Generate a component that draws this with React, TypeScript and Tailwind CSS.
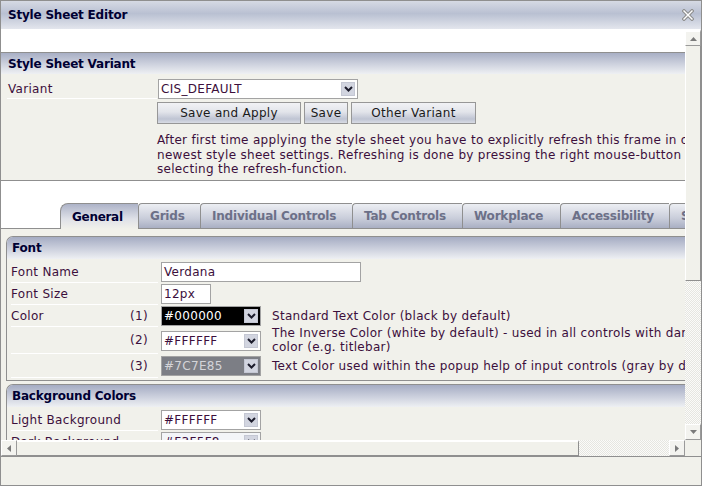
import React from "react";

function Chevron() {
  return (
    <svg width="9" height="6" viewBox="0 0 9 6">
      <path d="M1 1L4.5 4.5L8 1" fill="none" stroke="#1c1c2c" strokeWidth="2" />
    </svg>
  );
}

function DropBtn() {
  return (
    <div className="w-[14px] h-[14px] mr-[2px] shrink-0 flex items-center justify-center bg-[#d2d5e0] border border-[#c4c7d3]">
      <Chevron />
    </div>
  );
}

function Select({
  value,
  className,
  textClass,
}: {
  value: string;
  className: string;
  textClass: string;
}) {
  return (
    <div className={`flex h-[20px] shrink-0 items-center border border-[#a3a3a3] ${className}`}>
      <span className={`flex-1 pl-[2px] whitespace-nowrap leading-none ${textClass}`}>{value}</span>
      <DropBtn />
    </div>
  );
}

function Arrow({ dir }: { dir: "up" | "down" | "left" | "right" }) {
  const pts =
    dir === "up"
      ? "0,4 7,4 3.5,0"
      : dir === "down"
      ? "0,0 7,0 3.5,4"
      : dir === "left"
      ? "4,0 4,7 0,3.5"
      : "0,0 0,7 4,3.5";
  const w = dir === "up" || dir === "down" ? 7 : 4;
  const h = dir === "up" || dir === "down" ? 4 : 7;
  return (
    <svg width={w} height={h} viewBox={`0 0 ${w} ${h}`}>
      <polygon points={pts} fill="#7a7a7a" />
    </svg>
  );
}

function CloseIcon() {
  return (
    <svg width="12" height="12" viewBox="0 0 12 12">
      <path d="M2 2L10 10M10 2L2 10" stroke="#8e8e8e" strokeWidth="3.6" strokeLinecap="square" />
      <path d="M2 2L10 10M10 2L2 10" stroke="#ffffff" strokeWidth="1.4" strokeLinecap="square" />
    </svg>
  );
}

function Tab({ label, w, active }: { label: string; w: string; active?: boolean }) {
  if (active) {
    return (
      <div
        className={`${w} h-[26px] shrink-0 flex items-center pl-[11px] border-l border-t border-[#8f8f8f] rounded-tl-[8px] bg-[linear-gradient(to_bottom,#adb3c8,#dfe1e8_60%,#f1f1eb)] font-bold tracking-[-0.3px] text-[#000033]`}
      >
        {label}
      </div>
    );
  }
  return (
    <div
      className={`${w} h-[26px] shrink-0 flex items-center pl-[11px] border-l border-t border-b border-[#8f8f8f] rounded-tl-[4px] bg-[linear-gradient(to_bottom,#eceef3,#c9cdda_60%,#a9afc3)] font-bold tracking-[-0.2px] text-[#6c7088] whitespace-nowrap`}
    >
      {label}
    </div>
  );
}

function SectionHeader({ title }: { title: string }) {
  return (
    <div className="h-[22px] flex items-center pl-[5px] bg-[linear-gradient(to_bottom,#a5acc3,#cdd1de_55%,#eef0f3)] font-bold tracking-[-0.2px] text-[#000033]">
      {title}
    </div>
  );
}

function Row({
  h,
  label,
  num,
  children,
}: {
  h: string;
  label: string;
  num?: string;
  children: React.ReactNode;
}) {
  return (
    <div className={`${h} flex items-center`}>
      <div className="ml-[4px] w-[147px] h-full shrink-0 flex items-center justify-between pr-[10px] border-b border-white">
        <span>{label}</span>
        <span>{num}</span>
      </div>
      {children}
    </div>
  );
}

export default function App() {
  return (
    <div className="w-[702px] h-[486px] border border-[#8f8f8f] flex flex-col bg-[#f1f1eb] font-['DejaVu_Sans',Verdana,sans-serif] text-[12px] tracking-[0.3px] text-[#3c0f3c] overflow-hidden">
      {/* Title bar */}
      <div className="h-[28px] shrink-0 flex items-center justify-between pl-[7px] pr-[7px] bg-[linear-gradient(to_bottom,#d6dae4,#b9c0d2_45%,#e3e6ed)]">
        <span className="font-bold tracking-[-0.2px] text-[#000033]">Style Sheet Editor</span>
        <CloseIcon />
      </div>

      {/* Scroll region */}
      <div className="h-[411px] shrink-0 flex">
        <div className="w-[684px] overflow-hidden">
          <div className="w-[800px]">
            <div className="h-[24px] bg-white border-b border-[#8f8f8f]" />

            {/* Style Sheet Variant */}
            <div>
              <div className="h-[21px] flex items-center pl-[7px] bg-[linear-gradient(to_bottom,#a8afc5,#cfd3df_55%,#eef0f3)] font-bold tracking-[-0.2px] text-[#000033]">
                Style Sheet Variant
              </div>
              <div className="pt-[5px] flex items-center pl-[6px]">
                <div className="w-[150px] h-[20px] pl-[1px] flex items-center border-b border-white">Variant</div>
                <Select value="CIS_DEFAULT" className="ml-[1px] w-[200px] bg-white" textClass="text-[#3c0f3c]" />
              </div>
              <div className="mt-[3px] ml-[156px] flex gap-[3px]">
                {[
                  ["Save and Apply", "w-[144px]"],
                  ["Save", "w-[44px]"],
                  ["Other Variant", "w-[125px]"],
                ].map(([t, w]) => (
                  <div
                    key={t}
                    className={`${w} h-[22px] flex items-center justify-center border border-[#979797] bg-[linear-gradient(to_bottom,#f1f2f5,#e2e4ea_45%,#bfc4d3_80%,#d9dce4)] text-[#1a1a1a]`}
                  >
                    {t}
                  </div>
                ))}
              </div>
              <div className="mt-[9px] ml-[156px] h-[47px] leading-[14.5px] whitespace-nowrap">
                <div>After first time applying the style sheet you have to explicitly refresh this frame in order to see the</div>
                <div>newest style sheet settings. Refreshing is done by pressing the right mouse-button and</div>
                <div>selecting the refresh-function.</div>
              </div>
            </div>

            {/* Tabs */}
            <div className="bg-white border-t border-[#8f8f8f] pt-[22px] flex items-end">
              <div className="w-[59px] h-[26px] shrink-0 border-b border-[#8f8f8f]" />
              <Tab label="General" w="w-[78px]" active />
              <Tab label="Grids" w="w-[62px]" />
              <Tab label="Individual Controls" w="w-[152px]" />
              <Tab label="Tab Controls" w="w-[110px]" />
              <Tab label="Workplace" w="w-[98px]" />
              <Tab label="Accessibility" w="w-[109px]" />
              <Tab label="Styles" w="w-[90px]" />
              <div className="flex-1 h-[26px] border-b border-l border-[#8f8f8f]" />
            </div>

            {/* Sections */}
            <div className="pt-[7px]">
              <div className="ml-[5px] border-l border-t border-b border-[#8f8f8f] rounded-tl-[7px] overflow-hidden">
                <SectionHeader title="Font" />
                <div className="pt-[2px] pb-[2px]">
                  <Row h="h-[22px]" label="Font Name">
                    <div className="ml-[3px] w-[200px] h-[20px] bg-white border border-[#a3a3a3] flex items-center pl-[2px]">
                      Verdana
                    </div>
                  </Row>
                  <Row h="h-[22px]" label="Font Size">
                    <div className="ml-[3px] w-[50px] h-[20px] bg-white border border-[#a3a3a3] flex items-center pl-[2px]">
                      12px
                    </div>
                  </Row>
                  <Row h="h-[22px]" label="Color" num="(1)">
                    <Select value="#000000" className="ml-[3px] w-[100px] bg-black" textClass="text-white" />
                    <span className="ml-[11px] whitespace-nowrap">Standard Text Color (black by default)</span>
                  </Row>
                  <Row h="h-[27px]" label="" num="(2)">
                    <Select value="#FFFFFF" className="ml-[3px] w-[100px] bg-white" textClass="text-[#3c0f3c]" />
                    <div className="ml-[11px] whitespace-nowrap leading-[13.5px]">
                      <div>The Inverse Color (white by default) - used in all controls with dark background</div>
                      <div>color (e.g. titlebar)</div>
                    </div>
                  </Row>
                  <Row h="h-[24px]" label="" num="(3)">
                    <Select value="#7C7E85" className="ml-[3px] w-[100px] bg-[#7c7e85]" textClass="text-[#d4d4d8]" />
                    <span className="ml-[11px] whitespace-nowrap">
                      Text Color used within the popup help of input controls (gray by default)
                    </span>
                  </Row>
                </div>
              </div>

              <div className="mt-[3px] ml-[5px] border-l border-t border-[#8f8f8f] rounded-tl-[7px] overflow-hidden">
                <SectionHeader title="Background Colors" />
                <div className="pt-[2px]">
                  <Row h="h-[22px]" label="Light Background">
                    <Select value="#FFFFFF" className="ml-[3px] w-[100px] bg-white" textClass="text-[#3c0f3c]" />
                  </Row>
                  <Row h="h-[22px]" label="Dark Background">
                    <Select value="#F3F5F8" className="ml-[3px] w-[100px] bg-[#f3f5f8]" textClass="text-[#3c0f3c]" />
                  </Row>
                </div>
              </div>
            </div>
          </div>
        </div>

        {/* Vertical scrollbar */}
        <div className="w-[16px] shrink-0 flex flex-col">
          <div className="h-[17px] shrink-0 flex items-center justify-center bg-[#f3f3ef] border-t-[3px] border-l border-r border-b border-t-white border-l-white border-r-[#9a9a9a] border-b-[#9a9a9a]">
            <Arrow dir="up" />
          </div>
          <div className="h-[235px] shrink-0 bg-[#f1f1eb] border-l border-r border-b border-l-white border-r-[#8f8f8f] border-b-[#8f8f8f]" />
          <div className="flex-1 bg-[repeating-conic-gradient(#e6e6e1_0%_25%,#fbfbf9_0%_50%)] bg-[length:2px_2px]" />
          <div className="h-[16px] shrink-0 flex items-center justify-center bg-[#f3f3ef] border-t border-l border-r border-b border-t-white border-l-white border-r-[#9a9a9a] border-b-[#9a9a9a]">
            <Arrow dir="down" />
          </div>
        </div>
      </div>

      {/* Horizontal scrollbar */}
      <div className="h-[16px] shrink-0 flex">
        <div className="w-[16px] shrink-0 flex items-center justify-center bg-[#f3f3ef] border-t border-l border-r border-b border-t-white border-l-white border-r-[#9a9a9a] border-b-[#9a9a9a]">
          <Arrow dir="left" />
        </div>
        <div className="w-[562px] shrink-0 bg-[#f1f1eb] border-t-[2px] border-r border-b border-t-white border-r-[#8f8f8f] border-b-[#8f8f8f]" />
        <div className="w-[90px] shrink-0 bg-[repeating-conic-gradient(#e6e6e1_0%_25%,#fbfbf9_0%_50%)] bg-[length:2px_2px]" />
        <div className="w-[16px] shrink-0 flex items-center justify-center bg-[#f3f3ef] border-t border-l border-r border-b border-t-white border-l-white border-r-[#9a9a9a] border-b-[#9a9a9a]">
          <Arrow dir="right" />
        </div>
        <div className="flex-1" />
      </div>

      {/* Status bar */}
      <div className="flex-1 border-t border-[#8f8f8f]" />
    </div>
  );
}
